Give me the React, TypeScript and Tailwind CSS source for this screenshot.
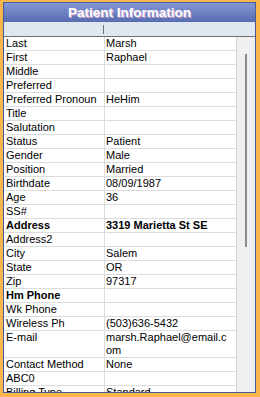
const rows: { label: string; value?: string; bold?: boolean; boldValue?: boolean; tall?: boolean }[] = [
  { label: 'Last', value: 'Marsh' },
  { label: 'First', value: 'Raphael' },
  { label: 'Middle' },
  { label: 'Preferred' },
  { label: 'Preferred Pronoun', value: 'HeHim' },
  { label: 'Title' },
  { label: 'Salutation' },
  { label: 'Status', value: 'Patient' },
  { label: 'Gender', value: 'Male' },
  { label: 'Position', value: 'Married' },
  { label: 'Birthdate', value: '08/09/1987' },
  { label: 'Age', value: '36' },
  { label: 'SS#' },
  { label: 'Address', value: '3319 Marietta St SE', bold: true, boldValue: true },
  { label: 'Address2' },
  { label: 'City', value: 'Salem' },
  { label: 'State', value: 'OR' },
  { label: 'Zip', value: '97317' },
  { label: 'Hm Phone', bold: true },
  { label: 'Wk Phone' },
  { label: 'Wireless Ph', value: '(503)636-5432' },
  { label: 'E-mail', value: 'marsh.Raphael@email.com', tall: true },
  { label: 'Contact Method', value: 'None' },
  { label: 'ABC0' },
  { label: 'Billing Type', value: 'Standard' },
]

export default function App() {
  return (
    <div
      className="w-[260px] h-[397px] bg-[#f8b64c] pt-[2px] pl-[3px] pr-[4px] pb-[4px]"
      style={{ fontFamily: '"Liberation Sans", Arial, sans-serif' }}
    >
      <div className="h-full border border-[#4b5996] bg-white flex flex-col overflow-hidden">
        {/* title bar */}
        <div className="h-[19px] shrink-0 bg-gradient-to-b from-[#8596d4] to-[#5a6cb1] flex items-center justify-center pt-[1px]">
          <span className="text-white font-bold text-[13.5px] leading-none [text-shadow:1px_1px_0_#c9a7cf]">
            Patient Information
          </span>
        </div>

        {/* column header */}
        <div className="h-[15px] shrink-0 bg-[#dfe7f1] border-b border-[#6f6f6f] flex items-center">
          <div className="w-[100px] h-[9px] border-r border-[#6f6f6f]" />
        </div>

        {/* grid + scrollbar */}
        <div className="flex-1 flex overflow-hidden">
          <div className="w-[233px] shrink-0 border-r border-[#d4d4d4] overflow-hidden">
            {rows.map((r) => (
              <div
                key={r.label}
                className={`flex border-b border-[#dcdcdc] text-[11px] leading-[13px] text-black ${r.tall ? 'h-[27px]' : 'h-[14px]'}`}
              >
                <div className={`w-[101px] shrink-0 pl-[2px] border-r border-[#dcdcdc] whitespace-nowrap ${r.bold ? 'font-bold' : ''}`}>
                  {r.label}
                </div>
                <div className={`flex-1 pl-[1px] pr-[7px] break-all ${r.boldValue ? 'font-bold' : ''}`}>
                  {r.value}
                </div>
              </div>
            ))}
          </div>
          <div className="flex-1 bg-[#f0f0f0] relative">
            <div className="absolute left-[8px] top-[17px] w-[2px] h-[193px] bg-[#8a8a8a]" />
          </div>
        </div>
      </div>
    </div>
  )
}
